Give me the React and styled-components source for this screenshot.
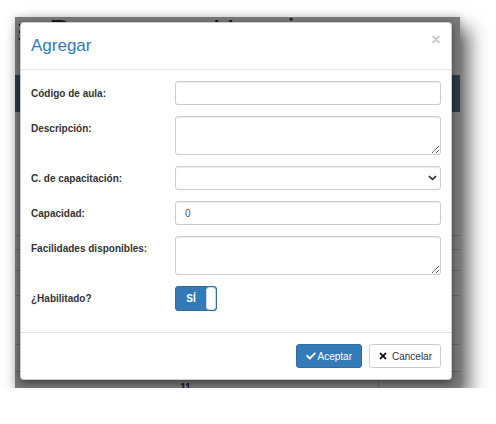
import styled, { createGlobalStyle } from "styled-components"
import { FaCheck, FaTimes } from "react-icons/fa";

const GlobalStyle = createGlobalStyle`
*{box-sizing:border-box;}
body{margin:0;background:#fff;font-family:"Liberation Sans", Arial, sans-serif;}
`

const filas = [
  { alto: 124 },
  { alto: 14 },
  { alto: 21 },
  { alto: 25 },
  { alto: 49 },
  { alto: 27, partida: true },
  { alto: 30, partida: true, texto: '11' },
]

export default function App(){
  return(
    <>
      <GlobalStyle/>
      <Captura>
        <Pagina>
          <TituloPagina><span>☰</span> Programas&nbsp;&nbsp;Horarios</TituloPagina>
          <Cabecera/>
          {filas.map((f,i)=><Fila key={i} $alto={f.alto}>
            <Celda>{f.texto}</Celda>
            <Celda $borde={f.partida}/>
          </Fila>)}
        </Pagina>
        <Fondo>
          <Modal>
            <Header>
              <Titulo>Agregar</Titulo>
              <Cerrar>×</Cerrar>
            </Header>
            <Cuerpo>
              <Etiqueta>Código de aula:</Etiqueta>
              <Campo type="text"/>
              <Etiqueta>Descripción:</Etiqueta>
              <Area/>
              <Etiqueta>C. de capacitación:</Etiqueta>
              <Selector>
                <Caja as="div"/>
                <Flecha viewBox="0 0 10 6" width="9" height="6">
                  <path d="M1 1l4 3.6L9 1" fill="none" stroke="#333" strokeWidth="1.8"/>
                </Flecha>
              </Selector>
              <Etiqueta>Capacidad:</Etiqueta>
              <Campo type="text" defaultValue="0"/>
              <Etiqueta>Facilidades disponibles:</Etiqueta>
              <Area/>
              <Etiqueta>¿Habilitado?</Etiqueta>
              <div>
                <Interruptor>
                  <Encendido>SÍ</Encendido>
                  <Perilla/>
                </Interruptor>
              </div>
            </Cuerpo>
            <Footer>
              <Boton $primario><FaCheck size={10}/>Aceptar</Boton>
              <Boton><FaTimes size={10}/>Cancelar</Boton>
            </Footer>
          </Modal>
        </Fondo>
      </Captura>
    </>
  )
}

const Captura=styled.div`
position:relative;
width:445px;height:371px;
margin:17px 0 0 15px;
overflow:hidden;
background:#fff;
box-shadow:9px 11px 18px rgba(0,0,0,.6), 0 0 8px rgba(0,0,0,.18);
`
const Pagina=styled.div`
display:flex;flex-direction:column;
`
const TituloPagina=styled.div`
height:58px;
padding-left:2px;
font-size:30px;line-height:26px;
color:#333;
white-space:nowrap;
span{font-size:22px;margin-right:4px;}
`
const Cabecera=styled.div`
height:37px;
background:#5c7a8e;
`
const Fila=styled.div`
display:grid;
grid-template-columns:363px 1fr;
height:${p=>p.$alto}px;
border-bottom:1px solid #d4d4d4;
`
const Celda=styled.div`
border-left:${p=>p.$borde?'1px solid #d4d4d4':'none'};
text-align:center;
padding-right:22px;
padding-top:10px;
font-size:10px;font-weight:bold;color:#333;
`
const Fondo=styled.div`
position:absolute;inset:0;
background:rgba(0,0,0,.52);
padding:5px 0 0 5px;
`
const Modal=styled.div`
width:432px;
background:#fff;
border:1px solid rgba(0,0,0,.2);
border-radius:4px;
box-shadow:0 3px 9px rgba(0,0,0,.5);
`
const Header=styled.div`
display:flex;
justify-content:space-between;
align-items:center;
height:47px;
padding:0 10px 0 10px;
border-bottom:1px solid #e5e5e5;
`
const Titulo=styled.h4`
margin:0;
font-size:17px;font-weight:400;
color:#337ab7;
`
const Cerrar=styled.span`
align-self:flex-start;
margin-top:8px;
font-size:17px;font-weight:bold;line-height:17px;
color:#000;opacity:.2;
`
const Cuerpo=styled.div`
display:grid;
grid-template-columns:144px 1fr;
row-gap:11px;
padding:11px 10px 21px 10px;
`
const Etiqueta=styled.label`
display:flex;align-items:center;
height:24px;
font-size:10px;font-weight:bold;
color:#333;
`
const Caja=styled.input`
display:block;
width:100%;height:24px;
padding:0 9px;
border:1px solid #ccc;
border-radius:3px;
background:#fff;
box-shadow:inset 0 1px 1px rgba(0,0,0,.075);
font-family:"Liberation Sans", Arial, sans-serif;
font-size:10px;color:#555;
outline:none;
`
const Campo=styled(Caja)``
const Area=styled(Caja).attrs({as:'textarea'})`
height:39px;
resize:vertical;
padding:5px 9px;
`
const Selector=styled.div`
position:relative;
`
const Flecha=styled.svg`
position:absolute;
right:4px;top:9px;
`
const Interruptor=styled.div`
display:flex;
width:42px;height:25px;
border:1px solid #2e6da4;
border-radius:3px;
overflow:hidden;
background:#337ab7;
`
const Encendido=styled.div`
flex:1;
display:flex;align-items:center;justify-content:center;
color:#fff;
font-size:10px;font-weight:bold;
`
const Perilla=styled.div`
width:10px;
background:#fff;
border-radius:3px;
border:1px solid #c9d9ea;
`
const Footer=styled.div`
display:flex;
justify-content:flex-end;
gap:7px;
padding:11px 10px;
border-top:1px solid #e5e5e5;
`
const Boton=styled.button`
display:inline-flex;align-items:center;gap:${p=>p.$primario?'2px':'4px'};
height:24px;
padding:0 ${p=>p.$primario?'9px':'8px'};
border-radius:3px;
border:1px solid ${p=>p.$primario?'#2e6da4':'#ccc'};
background:${p=>p.$primario?'#337ab7':'#fff'};
color:${p=>p.$primario?'#fff':'#333'};
font-family:"Liberation Sans", Arial, sans-serif;
font-size:10px;
svg{color:${p=>p.$primario?'#fff':'#111'};}
`
